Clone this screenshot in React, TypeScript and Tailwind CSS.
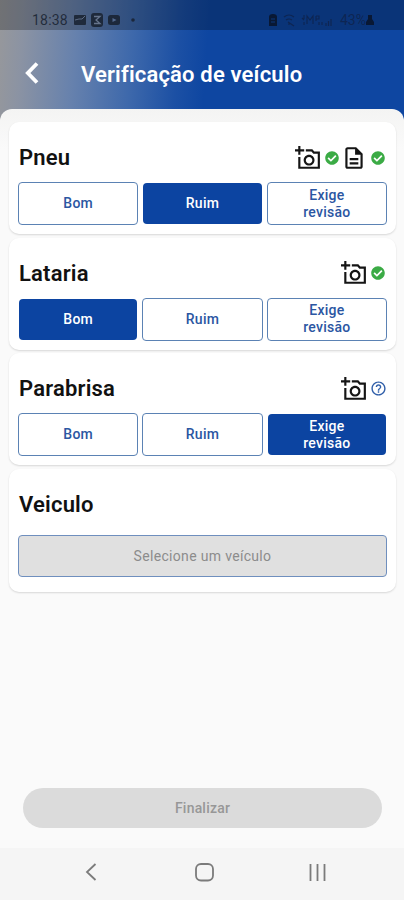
import React from 'react';
import clsx from 'clsx';
import { FaCheckCircle } from 'react-icons/fa';
import { MdHelpOutline, MdOutlineDescription } from 'react-icons/md';

type Status = 'done' | 'pending';

interface Item {
  title: string;
  selected: string;
  photo: Status;
  note?: Status;
}

const OPTIONS = ['Bom', 'Ruim', 'Exige revisão'];

const ITEMS: Item[] = [
  { title: 'Pneu', selected: 'Ruim', photo: 'done', note: 'done' },
  { title: 'Lataria', selected: 'Bom', photo: 'done' },
  { title: 'Parabrisa', selected: 'Exige revisão', photo: 'pending' },
];

const AddPhotoIcon: React.FC = () => (
  <svg viewBox="0 0 24 24" className="h-[26px] w-[26px]" fill="currentColor">
    <path d="M23 6h-5.17L16 4h-6v2h5.12l1.83 2H21v12H5v-9H3v11h20V6zM8 14c0 2.76 2.24 5 5 5s5-2.24 5-5-2.24-5-5-5-5 2.24-5 5zm5-3c1.65 0 3 1.35 3 3s-1.35 3-3 3-3-1.35-3-3 1.35-3 3-3zM5 6h3.5V4H5V1H3v3H0v2h3v3h2V6z" />
  </svg>
);

const StatusIcon: React.FC<{ status: Status }> = ({ status }) =>
  status === 'done' ? (
    <FaCheckCircle className="h-3.5 w-3.5 text-[#3bab45]" />
  ) : (
    <MdHelpOutline className="-m-[1.5px] h-[17px] w-[17px] text-[#2f5ea9]" />
  );

const StatusBar: React.FC = () => (
  <div className="flex h-[30px] items-center justify-between bg-black/25 pt-[9px] pr-[30px] pl-8">
    <div className="flex items-center text-[#17212f]/85">
      <span className="w-[37px] text-[14px] leading-none tracking-[0.2px]">18:38</span>
      <svg viewBox="0 0 64 14" className="ml-1 h-3.5 w-16">
        <rect x="1" y="2" width="12" height="10" rx="1" fill="currentColor" />
        <path d="M2 7l4-1 3 0 3-3" stroke="#5d6b84" fill="none" />
        <rect x="18" y="0" width="12" height="14" rx="3" fill="currentColor" />
        <path d="M21 3.500h6l-4 3.500 4 3.500h-6" stroke="#66748c" strokeWidth="1.3" fill="none" />
        <rect x="35" y="2" width="12" height="10" rx="2.5" fill="currentColor" />
        <path d="M39.500 5v4l4-2z" fill="#52698f" />
        <circle cx="60" cy="7" r="1.800" fill="currentColor" />
      </svg>
    </div>
    <div className="flex items-center text-[#0f2249]/80">
      <svg viewBox="0 0 68 14" className="mr-1 h-3.5 w-[68px]" fill="none" stroke="currentColor">
        <path d="M1 13V4q0-3 4-3t4 3v9z" fill="#091834" stroke="none" />
        <path d="M3 6h4M3 9h4" stroke="#0c3678" />
        <path d="M16 4q5-4 10 0M18 7q3-2 6 0M20 9l6 4M21 10v2" strokeWidth="1.200" />
        <path d="M36 2v4M34 5l2 2M39 11V3l3 4 3-4v8M48 3v5M48 3h3v3h-3M36 9v3M51 9v3M54 12V9" strokeWidth="1.100" />
        <path d="M58 13v-3M60.500 13V8M63 13V6" strokeWidth="1.200" />
      </svg>
      <span className="text-[14px] leading-none">43%</span>
      <svg viewBox="0 0 8 12" className="h-3 w-2 text-[#091834]" fill="currentColor">
        <path d="M2 1h4v4l2 3v3H0V8l2-3z" />
      </svg>
    </div>
  </div>
);

const OptionButton: React.FC<{ label: string; active: boolean }> = ({ label, active }) => (
  <button
    type="button"
    className={clsx(
      'flex items-center justify-center rounded-[4px] px-6 text-center text-[14px] leading-[17px] font-medium tracking-[0.25px]',
      active
        ? 'm-px h-[41px] rounded-[3px] bg-[#0c44a1] text-white'
        : 'h-[43px] border border-[#5b82b4] bg-white text-[#2b56a2]'
    )}
  >
    {label}
  </button>
);

const Card: React.FC<{ children: React.ReactNode; className?: string }> = ({ children, className }) => (
  <section
    className={clsx(
      'rounded-[10px] bg-white px-[9px] shadow-[0_1px_2px_rgba(0,0,0,0.14)]',
      className
    )}
  >
    {children}
  </section>
);

const CardTitle: React.FC<{ children: React.ReactNode }> = ({ children }) => (
  <h2 className="pl-px text-[22px] leading-[29px] font-semibold tracking-[0.2px] text-[#111]">{children}</h2>
);

const ItemCard: React.FC<{ item: Item }> = ({ item }) => (
  <Card className="h-[112px] pt-[21px]">
    <div className="flex h-[29px] items-center justify-between pr-0.5">
      <CardTitle>{item.title}</CardTitle>
      <div className="flex items-center text-[#151515]">
        <AddPhotoIcon />
        <span className="ml-1">
          <StatusIcon status={item.photo} />
        </span>
        {item.note && (
          <>
            <MdOutlineDescription className="ml-0.5 h-[26px] w-[26px]" />
            <span className="ml-1">
              <StatusIcon status={item.note} />
            </span>
          </>
        )}
      </div>
    </div>
    <div className="mt-[10px] grid grid-cols-3 gap-1">
      {OPTIONS.map((option) => (
        <OptionButton key={option} label={option} active={option === item.selected} />
      ))}
    </div>
  </Card>
);

const App: React.FC = () => {
  return (
    <div className="flex h-[900px] w-[404px] flex-col overflow-hidden bg-[#fafafa] font-['Roboto',sans-serif]">
      <div className="h-[120px] shrink-0 bg-[linear-gradient(94deg,#97989b_0%,#8b93a3_6%,#6681ad_19%,#3d68ab_33%,#1c50a4_44%,#0e46a1_51%,#0e46a1_100%)]">
        <StatusBar />
        <header className="flex h-[88px] items-center pl-[25px] text-white">
          <svg viewBox="0 0 14 22" className="-mt-0.5 h-[22px] w-[14px]" fill="none" stroke="currentColor" strokeWidth="3.800">
            <path d="M12 1.500L2.800 11l9.200 9.500" />
          </svg>
          <h1 className="mt-px ml-[42px] text-[22px] leading-none font-semibold tracking-[0.17px] whitespace-nowrap">
            Verificação de veículo
          </h1>
        </header>
      </div>

      <main className="-mt-[11px] flex flex-1 flex-col rounded-t-[12px] bg-[linear-gradient(#f4f4f3_0px,#fafafa_40px)] pt-[13px] pr-2 pl-[9px]">
        <div className="flex flex-col gap-[3.5px]">
          {ITEMS.map((item) => (
            <ItemCard key={item.title} item={item} />
          ))}
          <Card className="h-[123px] pt-[21px]">
            <CardTitle>Veiculo</CardTitle>
            <button
              type="button"
              className="mt-4 h-[42px] w-full rounded-[4px] border border-[#6f8fbe] bg-[#e0e0e0] pt-0.5 text-[14px] tracking-[0.32px] text-[#8c8c8c]"
            >
              Selecione um veículo
            </button>
          </Card>
        </div>
        <button
          type="button"
          className="mx-[14px] mt-auto mb-5 h-[40px] rounded-full bg-[#dbdbdb] pt-px text-[14px] font-medium tracking-[0.2px] text-[#979797]"
        >
          Finalizar
        </button>
      </main>

      <nav className="flex h-[52px] shrink-0 items-center bg-[#f5f5f5] pb-2 text-[#7b7b7b]">
        <svg viewBox="0 0 404 44" className="h-11 w-full" fill="none" stroke="currentColor" strokeWidth="1.800">
          <path d="M95.500 16L87 24l8.500 8" />
          <rect x="196" y="16" width="17" height="16.500" rx="5" />
          <path d="M310.500 16v17M317.500 16v17M324.500 16v17" />
        </svg>
      </nav>
    </div>
  );
};

export default App;
